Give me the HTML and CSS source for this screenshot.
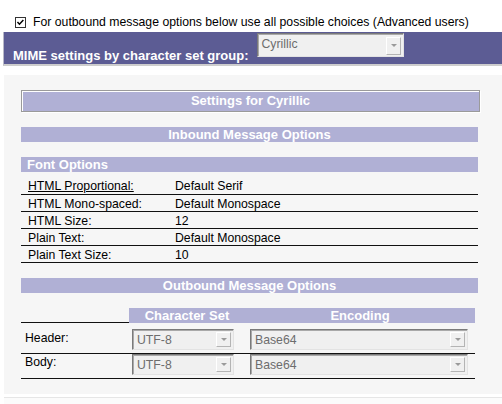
FILE: index.html
```html
<!DOCTYPE html>
<html lang="en">

<head>
  <meta charset="UTF-8">
  <title>MIME settings</title>
  <link rel="stylesheet" href="styles.css">
</head>

<body>
  <label class="advanced">
    <span class="check">
      <svg viewBox="0 0 11 11" fill="none" stroke="#000" stroke-width="1.8">
        <path d="M1.8 5 4.2 7.6 9 2.4" />
      </svg>
    </span>
    For outbound message options below use all possible choices (Advanced users)
  </label>

  <div class="group-bar">
    <span class="group-label">MIME settings by character set group:</span>
    <div class="combo group-combo">
      <span class="combo-text">Cyrillic</span>
      <span class="combo-arrow"></span>
    </div>
  </div>

  <section class="panel">
    <div class="settings-title">Settings for Cyrillic</div>

    <h2 class="band">Inbound Message Options</h2>
    <h3 class="band band-left">Font Options</h3>
    <table class="fonts">
      <tr><td><span class="focused">HTML Proportional:</span></td><td>Default Serif</td></tr>
      <tr><td>HTML Mono-spaced:</td><td>Default Monospace</td></tr>
      <tr><td>HTML Size:</td><td>12</td></tr>
      <tr><td>Plain Text:</td><td>Default Monospace</td></tr>
      <tr><td>Plain Text Size:</td><td>10</td></tr>
    </table>

    <h2 class="band">Outbound Message Options</h2>
    <div class="encodings">
      <div class="enc-corner"></div>
      <div class="enc-head">Character Set</div>
      <div class="enc-head">Encoding</div>

      <div class="enc-row">
        <span class="enc-label">Header:</span>
        <div class="combo charset"><span class="combo-text">UTF-8</span><span class="combo-arrow"></span></div>
        <div class="combo encoding"><span class="combo-text">Base64</span><span class="combo-arrow"></span></div>
      </div>
      <div class="enc-row enc-row-tight">
        <span class="enc-label">Body:</span>
        <div class="combo charset"><span class="combo-text">UTF-8</span><span class="combo-arrow"></span></div>
        <div class="combo encoding"><span class="combo-text">Base64</span><span class="combo-arrow"></span></div>
      </div>
    </div>
  </section>
  <div class="next-panel"></div>
</body>

</html>
```

FILE: styles.css
```css
body {
  margin: 0;
  font-family: "Liberation Sans", Arial, sans-serif;
  font-size: 12.25px;
  color: #000;
  background: #fff;
  overflow: hidden;
}

/* top checkbox */
.advanced {
  display: flex;
  align-items: center;
  gap: 7px;
  height: 14px;
  padding: 15px 0 3px 15px;
}

.check {
  display: inline-block;
  box-sizing: border-box;
  inline-size: 11px;
  block-size: 11px;
  border: 1px solid #333;
  background: #fff;
}

.check>svg {
  display: block;
  inline-size: 9px;
  block-size: 9px;
}

/* character set group bar */
.group-bar {
  display: flex;
  align-items: flex-start;
  gap: 8px;
  box-sizing: border-box;
  block-size: 34px;
  margin-left: 3px;
  padding: 1px 0 0 9px;
  background: #5c5c94;
  border-left: 1px solid #b8b8c8;
  border-bottom: 2px solid #cdcdcd;
}

.group-label {
  margin-top: 15px;
  font-size: 13px;
  font-weight: 700;
  line-height: 15px;
  color: #fff;
}

/* disabled combo boxes */
.combo {
  display: flex;
  align-items: center;
  box-sizing: border-box;
  border: 1px solid;
  border-color: #7a7a7a #e3e3e3 #e3e3e3 #7a7a7a;
  box-shadow: inset 1px 1px #a9a9a9;
  background: #f0f0f0;
  color: #6d6d6d;
  padding: 0 2px 0 4px;
}

.combo-text {
  flex: 1;
  line-height: 14px;
}

.combo-arrow {
  position: relative;
  box-sizing: border-box;
  inline-size: 15px;
  block-size: 15px;
  border: 1px solid;
  border-color: #fff #b4b4b4 #b4b4b4 #fff;
  background: #f0f0f0;
}

.combo-arrow::after {
  content: "";
  position: absolute;
  left: 4px;
  top: 5px;
  border: 3px solid transparent;
  border-top: 3px solid #9a9a9a;
  border-bottom: 0;
}

.group-combo {
  inline-size: 147px;
  block-size: 24px;
  align-items: flex-start;
  padding-top: 3px;
}

.group-combo .combo-arrow {
  block-size: 18px;
}

.group-combo .combo-arrow::after {
  top: 6px;
}

/* settings panel */
.panel {
  margin: 9px 0 0 4px;
  padding: 15px 0 15px 17px;
  background: #f6f6f6;
}

.settings-title {
  box-sizing: border-box;
  inline-size: 459px;
  block-size: 22px;
  border: 1px solid #9a9a9a;
  box-shadow: inset 1px 1px #fff, 1px 1px #fff;
  background: #b0b0d5;
  color: #fff;
  font-size: 13px;
  font-weight: 700;
  line-height: 19px;
  text-align: center;
}

.band {
  box-sizing: border-box;
  inline-size: 457px;
  block-size: 15px;
  margin: 15px 0 0;
  background: #b0b0d5;
  color: #fff;
  font-size: 13px;
  font-weight: 700;
  line-height: 15px;
  text-align: center;
}

.band-left {
  padding-left: 6px;
  text-align: left;
}

.fonts {
  inline-size: 457px;
  border-collapse: collapse;
}

.fonts td {
  block-size: 16px;
  padding: 0;
  border-bottom: 1px solid #111;
  line-height: 14px;
  vertical-align: bottom;
}

.fonts tr:first-child td {
  block-size: 21px;
  padding-bottom: 1px;
}

.fonts td:first-child {
  inline-size: 147px;
  padding-left: 7px;
}

.focused {
  text-decoration: underline;
}

/* outbound encodings */
.encodings {
  display: grid;
  grid-template-columns: 108px 116px 230px;
  inline-size: 457px;
  margin-top: 15px;
}

.enc-corner {
  border-bottom: 1px solid #111;
}

.enc-head {
  block-size: 15px;
  background: #b0b0d5;
  color: #fff;
  font-size: 13px;
  font-weight: 700;
  line-height: 15px;
  text-align: center;
}

.enc-head:last-of-type {
  margin-left: 3px;
}

.enc-row {
  display: grid;
  grid-column: 1 / -1;
  grid-template-columns: subgrid;
  align-items: start;
  padding: 6px 0 3px;
  border-bottom: 1px solid #111;
}

.enc-row-tight {
  padding: 0 0 3px;
}

.enc-label {
  padding: 2px 0 0 4px;
  line-height: 14px;
}

.enc-row-tight .enc-label {
  padding-top: 1px;
}

.combo.charset,
.combo.encoding {
  block-size: 21px;
}

.combo.charset {
  inline-size: 102px;
  margin-left: 3px;
}

.combo.encoding {
  inline-size: 218px;
  margin-left: 5px;
}

.next-panel {
  block-size: 10px;
  margin: 3px 0 0 4px;
  border-top: 1px solid #e6e6e6;
  background: #fbfbfb;
}
```
